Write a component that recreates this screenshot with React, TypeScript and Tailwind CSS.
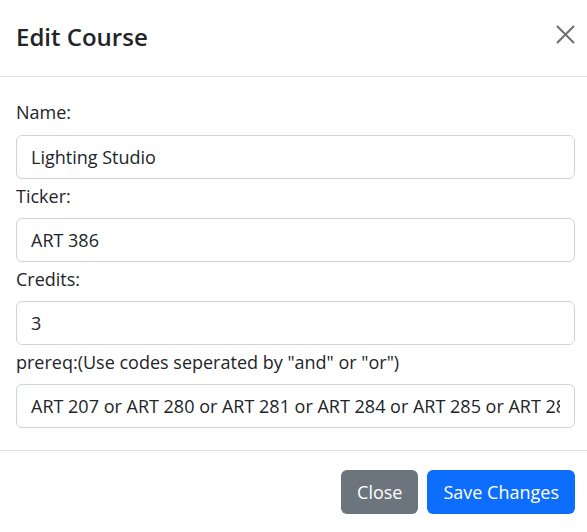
import { useState } from 'react';

interface CourseType {
  name: string;
  ticker: string;
  credits: string;
  prereq: string;
}

const FIELDS: { id: keyof CourseType; label: string }[] = [
  { id: 'name', label: 'Name:' },
  { id: 'ticker', label: 'Ticker:' },
  { id: 'credits', label: 'Credits:' },
  { id: 'prereq', label: 'prereq:(Use codes seperated by "and" or "or")' },
];

function App() {
  const [formData, setFormData] = useState<CourseType>({
    name: 'Lighting Studio',
    ticker: 'ART 386',
    credits: '3',
    prereq:
      'ART 207 or ART 280 or ART 281 or ART 284 or ART 285 or ART 286 or ART 287',
  });

  const handleInputChange = (event: React.ChangeEvent<HTMLInputElement>) => {
    const { id, value } = event.target;
    setFormData((prev) => ({ ...prev, [id]: value }));
  };

  return (
    <div className="w-[587px] h-[532px] bg-white text-[#212529] font-['Segoe_UI','Open_Sans',sans-serif] overflow-hidden">
      <div className="flex h-[77px] items-center justify-between pl-4 pr-3 border-b border-[#dee2e6]">
        <h4 className="text-[24px] font-semibold leading-none pb-[3px]">
          Edit Course
        </h4>
        <button className="flex h-[20px] w-[20px] items-center justify-center text-[#6e6e6e] mb-[8px]">
          <svg width="19" height="19" viewBox="0 0 19 19">
            <path
              d="M1 1L18 18M18 1L1 18"
              stroke="currentColor"
              strokeWidth="2"
            />
          </svg>
        </button>
      </div>
      <form className="flex flex-col pl-4 pr-3 pt-[23px] pb-[22px] border-b border-[#dee2e6]">
        {FIELDS.map((field, i) => (
          <div key={field.id} className={i === 0 ? '' : 'mt-[5px]'}>
            <label
              htmlFor={field.id}
              className={
                i === 0
                  ? 'block h-6 text-[18px] leading-6 mb-[11px]'
                  : 'block h-6 text-[18px] leading-6 mb-[10px]'
              }
            >
              {field.label}
            </label>
            <input
              id={field.id}
              type="text"
              value={formData[field.id]}
              onChange={handleInputChange}
              className="block w-full h-[44px] px-[14px] text-[18px] rounded-[6px] border border-[#ced4da] outline-none"
            />
          </div>
        ))}
      </form>
      <div className="flex justify-end gap-[9px] pl-4 pr-3 pt-[19px]">
        <button className="h-[44px] px-4 rounded-[6px] bg-[#6c757d] text-white text-[18px]">
          Close
        </button>
        <button className="h-[44px] px-4 rounded-[6px] bg-[#0d6efd] text-white text-[18px]">
          Save Changes
        </button>
      </div>
    </div>
  );
}

export default App;
